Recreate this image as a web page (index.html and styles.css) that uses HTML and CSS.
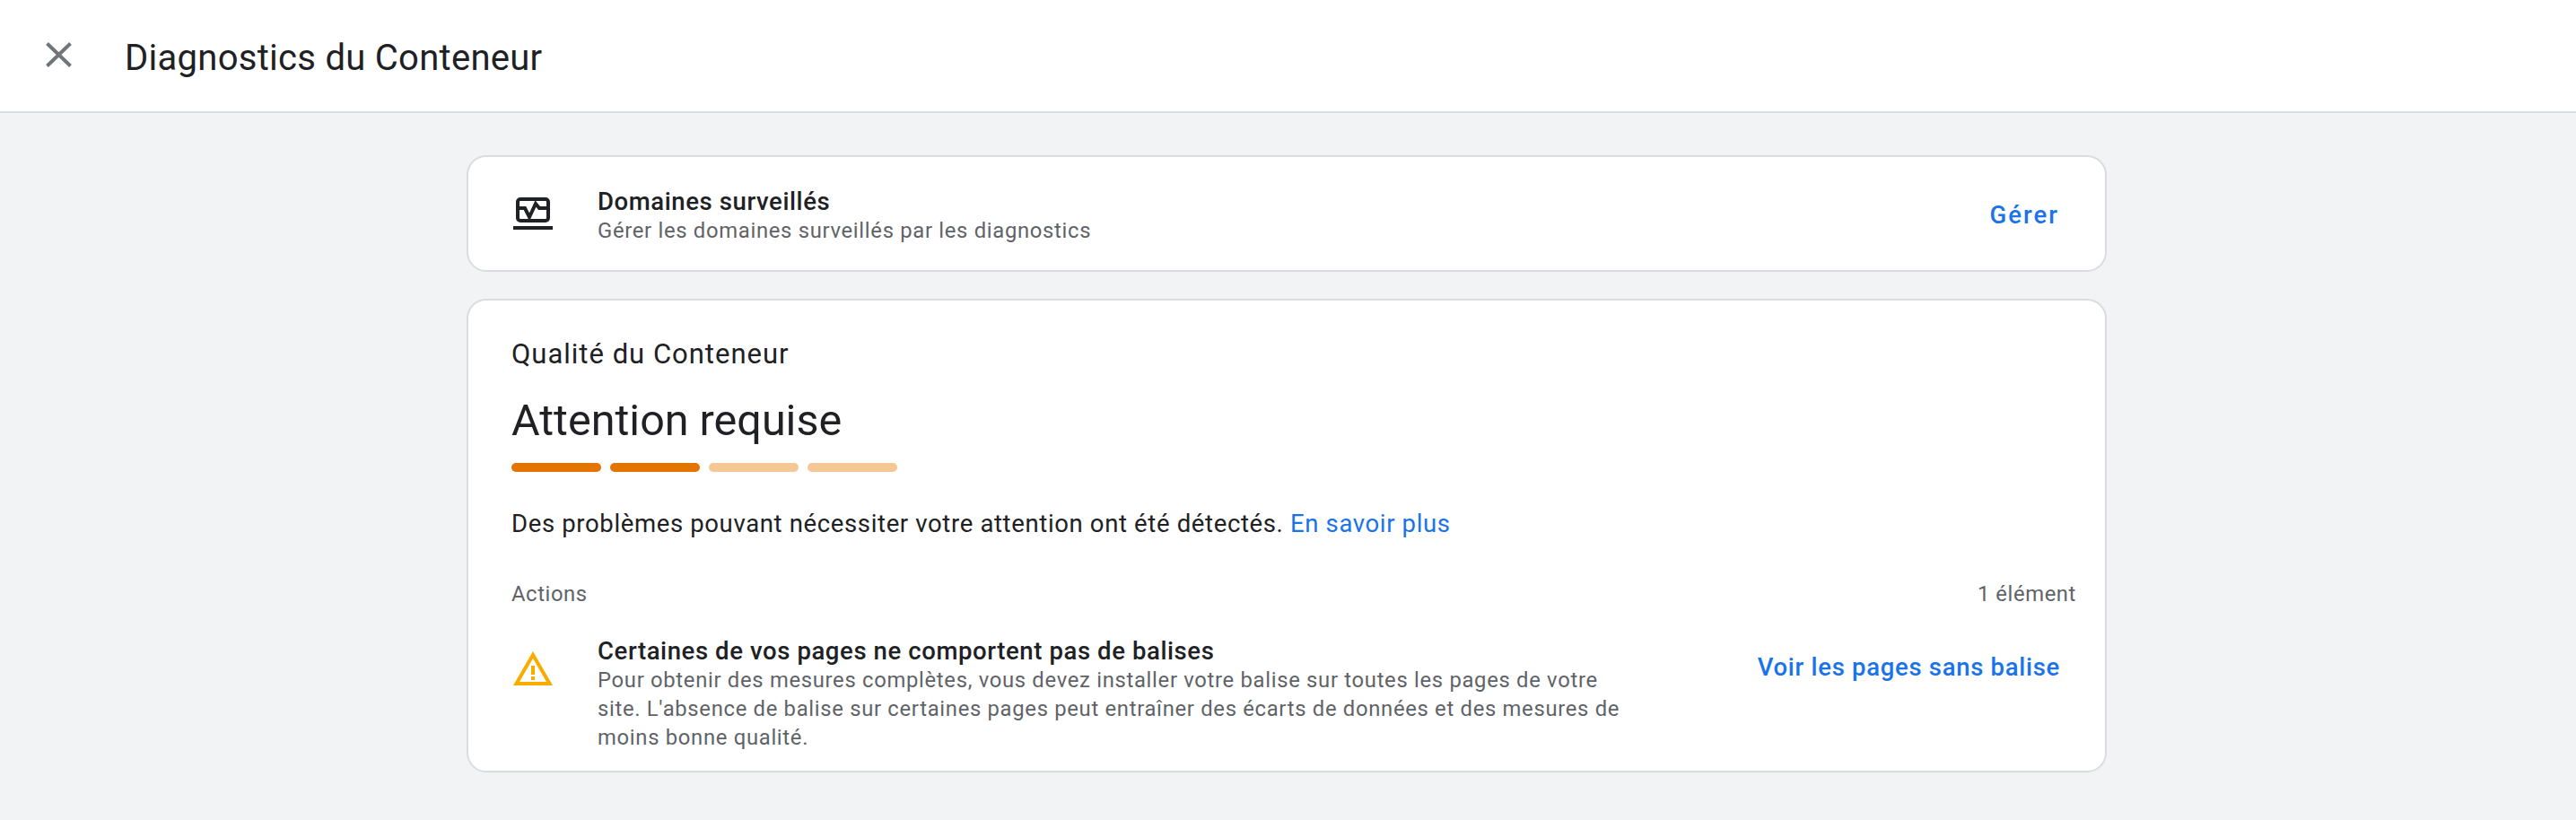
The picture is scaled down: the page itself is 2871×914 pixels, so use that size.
FILE: index.html
```html
<!DOCTYPE html>
<html lang="fr">
<head>
<meta charset="utf-8">
<title>Diagnostics du Conteneur</title>
<link rel="stylesheet" href="styles.css">
</head>
<body>
<header class="topbar">
  <svg class="close" viewBox="0 0 29 28" aria-hidden="true"><path d="M1.5 1.5 27.5 26.5M27.5 1.5 1.5 26.5"/></svg>
  <h1 class="page-title">Diagnostics du Conteneur</h1>
</header>
<main class="content">
  <section class="card domains">
    <svg class="icon-monitor" viewBox="0 0 44 36" aria-hidden="true">
      <rect x="5" y="2" width="34" height="24" rx="3"/>
      <path d="M4 12H13L18 22 25 7 29 12H40"/>
      <path d="M0 34H44"/>
    </svg>
    <div class="row-text">
      <div class="row-title">Domaines surveillés</div>
      <div class="row-sub">Gérer les domaines surveillés par les diagnostics</div>
    </div>
    <a class="action action-short" href="#">Gérer</a>
  </section>
  <section class="card quality">
    <h2 class="quality-label">Qualité du Conteneur</h2>
    <div class="status">Attention requise</div>
    <div class="meter">
      <span class="seg on"></span><span class="seg on"></span><span class="seg"></span><span class="seg"></span>
    </div>
    <p class="summary">Des problèmes pouvant nécessiter votre attention ont été détectés. <a href="#">En savoir plus</a></p>
    <div class="list-head"><span>Actions</span><span>1 élément</span></div>
    <div class="item">
      <svg class="icon-warn" viewBox="0 0 24 24" aria-hidden="true"><path d="M12 5.99 19.53 19H4.47L12 5.99M12 2 1 21h22L12 2zm1 14h-2v2h2v-2zm0-6h-2v5h2v-5z"/></svg>
      <div class="row-text item-text">
        <div class="row-title">Certaines de vos pages ne comportent pas de balises</div>
        <div class="row-sub">Pour obtenir des mesures complètes, vous devez installer votre balise sur toutes les pages de votre site. L'absence de balise sur certaines pages peut entraîner des écarts de données et des mesures de moins bonne qualité.</div>
      </div>
      <a class="action" href="#">Voir les pages sans balise</a>
    </div>
  </section>
</main>
</body>
</html>
```
FILE: styles.css
```css
* { box-sizing: border-box; }
html, body { margin: 0; height: 100%; }
body { background: #f1f3f4; color: #202124; font-family: Roboto, "Liberation Sans", sans-serif; }
a { text-decoration: none; color: #1a73e8; }

.topbar { height: 126px; background: #fff; border-bottom: 2px solid #dadce0; display: flex; align-items: center; padding-left: 51px; }
.close { width: 29px; height: 28px; margin-top: -2px; fill: none; stroke: #70757a; stroke-width: 4; }
.page-title { margin: 5px 0 0 59px; font: 400 40px/1 Roboto, sans-serif; letter-spacing: .28px; }

.content { width: 1828px; margin: 47px 0 0 520px; display: flex; flex-direction: column; gap: 30px; }
.card { background: #fff; border: 2px solid #dadce0; border-radius: 22px; }

.domains { height: 130px; display: flex; align-items: center; padding: 0 51px 0 48px; }
.icon-monitor { width: 44px; height: 36px; margin-left: 2px; flex: none; fill: none; stroke: #202124; stroke-width: 4; }
.row-text { margin-left: 50px; flex: 1; padding-top: 5px; }
.row-title { font-size: 27.5px; line-height: 32px; font-weight: 500; letter-spacing: .6px; }
.row-sub { font-size: 23.8px; line-height: 32px; color: #5f6368; letter-spacing: .7px; }
.action { font: 500 27.5px/1 Roboto, sans-serif; letter-spacing: .7px; white-space: nowrap; padding-top: 3px; }
.action-short { letter-spacing: 2px; }

.quality { height: 528px; padding: 42px 32px 0 48px; }
.quality-label { margin: 0; font: 400 31px/36px Roboto, sans-serif; letter-spacing: 1px; }
.status { margin-top: 26px; font: 400 48.5px/60px Roboto, sans-serif; }
.meter { display: flex; gap: 10px; margin-top: 17px; }
.seg { width: 100px; height: 10px; border-radius: 5px; background: #f4c795; }
.seg.on { background: #e37400; }
.summary { margin: 40px 0 0; font-size: 27.5px; line-height: 36px; letter-spacing: .64px; }
.list-head { display: flex; justify-content: space-between; margin-top: 44px; font-size: 23.8px; line-height: 32px; color: #5f6368; letter-spacing: .6px; }
.item { display: flex; align-items: flex-start; margin-top: 32px; padding-right: 18px; }
.icon-warn { width: 48px; height: 48px; flex: none; margin-top: 12px; fill: #f9ab00; }
.item-text { margin-left: 48px; flex: none; width: 1145px; padding-top: 0; }
.item .action { margin-left: auto; margin-top: 17px; }
```
